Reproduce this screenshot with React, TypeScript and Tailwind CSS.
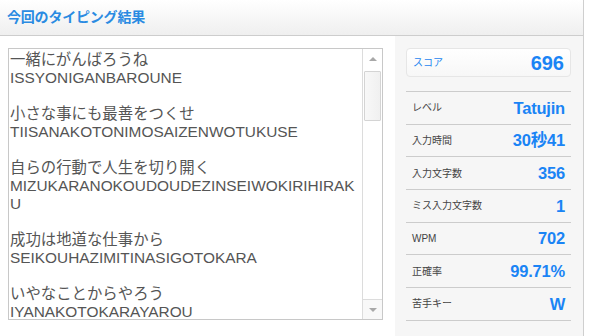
import React from 'react';

const lines: { ja: string; ro: string }[] = [
  { ja: '一緒にがんばろうね', ro: 'ISSYONIGANBAROUNE' },
  { ja: '小さな事にも最善をつくせ', ro: 'TIISANAKOTONIMOSAIZENWOTUKUSE' },
  { ja: '自らの行動で人生を切り開く', ro: 'MIZUKARANOKOUDOUDEZINSEIWOKIRIHIRAKU' },
  { ja: '成功は地道な仕事から', ro: 'SEIKOUHAZIMITINASIGOTOKARA' },
  { ja: 'いやなことからやろう', ro: 'IYANAKOTOKARAYAROU' },
];

const stats: { label: string; value: string }[] = [
  { label: 'レベル', value: 'Tatujin' },
  { label: '入力時間', value: '30秒41' },
  { label: '入力文字数', value: '356' },
  { label: 'ミス入力文字数', value: '1' },
  { label: 'WPM', value: '702' },
  { label: '正確率', value: '99.71%' },
  { label: '苦手キー', value: 'W' },
];

const jp = { fontFamily: '"Liberation Sans", "Noto Sans CJK JP", sans-serif' };

export default function App() {
  return (
    <div className="w-[589px] h-[336px] bg-white overflow-hidden" style={jp}>
      <div className="w-[584px] h-full flex flex-col border-r border-[#cfcfcf]">
        <header className="h-[36px] shrink-0 flex items-center px-[7px] border-b border-[#cdcdcd] bg-gradient-to-b from-white to-[#efefef]">
          <h1 className="text-[14px] font-bold text-[#2a8be2] tracking-[-0.2px]">今回のタイピング結果</h1>
        </header>

        <div className="flex flex-1 min-h-0">
          {/* typed text */}
          <div className="w-[395px] shrink-0 pl-[8px] pt-[12px]">
            <div className="w-[375px] h-[272px] border border-[#c8c8c8] flex overflow-hidden">
              <div className="w-[353px] pl-[1px] pt-[2px] overflow-hidden">
                <div className="w-[350px] text-[15.4px] leading-[18px] text-[#555] break-all">
                  {lines.map((l, i) => (
                    <div key={i} className={i > 0 ? 'mt-[18px]' : ''}>
                      <div>{l.ja}</div>
                      <div>{l.ro}</div>
                    </div>
                  ))}
                </div>
              </div>
              <div className="flex-1 border-l border-[#dcdcdc] flex flex-col bg-white">
                <div className="h-[20px] flex items-center justify-center">
                  <div className="w-0 h-0 border-x-[4px] border-x-transparent border-b-[4px] border-b-[#a8a8a8]" />
                </div>
                <div className="mx-[1px] mt-[2px] h-[50px] border border-[#d4d4d4] rounded-[1px] bg-gradient-to-r from-[#f8f8f8] to-[#f0f0f0]" />
                <div className="flex-1" />
                <div className="h-[20px] border-t border-[#dcdcdc] flex items-center justify-center bg-[#f8f8f8]">
                  <div className="w-0 h-0 border-x-[4px] border-x-transparent border-t-[4px] border-t-[#a8a8a8]" />
                </div>
              </div>
            </div>
          </div>

          {/* stats */}
          <div className="flex-1 bg-[#f6f6f6] pl-[11px] pr-[12px] pt-[12px]">
            <div className="h-[29px] rounded-[4px] border border-[#e6e6e6] bg-gradient-to-b from-white to-[#f7f7f7] flex items-center justify-between pl-[6px] pr-[6px]">
              <span className="text-[10px] text-[#1e86f0]">スコア</span>
              <span className="text-[20px] font-bold text-[#1a84f5] leading-none">696</span>
            </div>
            <div className="mt-[14px] border-b border-[#cccccc]">
              {stats.map((s) => (
                <div key={s.label} className="h-[32.7px] border-t border-[#cccccc] flex items-center justify-between pl-[6px] pr-[6px]">
                  <span className="text-[10px] text-[#444]">{s.label}</span>
                  <span className="text-[16.5px] font-bold text-[#1a84f5] leading-none tracking-[-0.2px]">{s.value}</span>
                </div>
              ))}
            </div>
          </div>
        </div>
      </div>
    </div>
  );
}
